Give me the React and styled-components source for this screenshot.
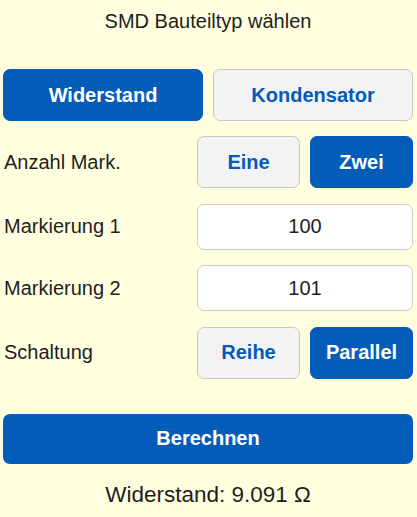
import React, { useState } from "react";
import styled, { createGlobalStyle } from "styled-components";

const Global = createGlobalStyle`
  html, body {
    margin: 0;
    padding: 0;
    background: #ffffe0;
  }
  body {
    font-family: "Liberation Sans", Arial, sans-serif;
    color: #1e1e1e;
  }
`;

const BLUE = "#045cb9";

const Page = styled.div`
  width: 410px;
  padding: 0 4px 0 3px;
  box-sizing: content-box;
  display: flex;
  flex-direction: column;
`;

const Title = styled.h1`
  margin: 0;
  padding-top: 10px;
  font-size: 20px;
  line-height: 23px;
  font-weight: normal;
  text-align: center;
`;

const TypeRow = styled.div`
  margin-top: 36px;
  display: grid;
  grid-template-columns: 1fr 1fr;
  column-gap: 10px;
  height: 52px;
`;

const ToggleButton = styled.button`
  box-sizing: border-box;
  height: 100%;
  width: 100%;
  margin: 0;
  border-radius: 7px;
  font-family: "Liberation Sans", Arial, sans-serif;
  font-size: 20px;
  font-weight: bold;
  cursor: pointer;
  border: 1px solid ${(p) => (p.$active ? BLUE : "#c9c6c0")};
  background: ${(p) => (p.$active ? BLUE : "#f3f3f4")};
  color: ${(p) => (p.$active ? "#ffffff" : BLUE)};
`;

const Form = styled.div`
  margin-top: 15px;
  display: grid;
  grid-template-columns: 194px 216px;
  row-gap: 15.5px;
  align-items: center;
`;

const Label = styled.div`
  font-size: 20px;
  line-height: 23px;
  padding-left: 1px;
`;

const Segmented = styled.div`
  display: grid;
  grid-template-columns: 1fr 1fr;
  column-gap: 10px;
  height: 52px;
`;

const Field = styled.input`
  box-sizing: border-box;
  width: 100%;
  height: 46px;
  margin: 0;
  border: 1px solid #cfccc6;
  border-radius: 7px;
  background: #ffffff;
  text-align: center;
  font-family: "Liberation Sans", Arial, sans-serif;
  font-size: 20px;
  color: #1e1e1e;
  outline: none;
`;

const CalcButton = styled.button`
  margin-top: 35px;
  height: 50px;
  width: 100%;
  border: none;
  border-radius: 7px;
  background: ${BLUE};
  color: #fff;
  font-family: "Liberation Sans", Arial, sans-serif;
  font-size: 20px;
  font-weight: bold;
  cursor: pointer;
`;

const Result = styled.div`
  margin-top: 18px;
  text-align: center;
  font-size: 22.5px;
  line-height: 26px;
`;

export default function App() {
  const [type, setType] = useState("w");
  const [count, setCount] = useState(2);
  const [circuit, setCircuit] = useState("p");
  const [m1, setM1] = useState("100");
  const [m2, setM2] = useState("101");

  return (
    <>
      <Global />
      <Page>
        <Title>SMD Bauteiltyp wählen</Title>
        <TypeRow>
          <ToggleButton $active={type === "w"} onClick={() => setType("w")}>
            Widerstand
          </ToggleButton>
          <ToggleButton $active={type === "k"} onClick={() => setType("k")}>
            Kondensator
          </ToggleButton>
        </TypeRow>
        <Form>
          <Label>Anzahl Mark.</Label>
          <Segmented>
            <ToggleButton $active={count === 1} onClick={() => setCount(1)}>
              Eine
            </ToggleButton>
            <ToggleButton $active={count === 2} onClick={() => setCount(2)}>
              Zwei
            </ToggleButton>
          </Segmented>
          <Label>Markierung 1</Label>
          <Field value={m1} onChange={(e) => setM1(e.target.value)} />
          <Label>Markierung 2</Label>
          <Field value={m2} onChange={(e) => setM2(e.target.value)} />
          <Label>Schaltung</Label>
          <Segmented>
            <ToggleButton $active={circuit === "r"} onClick={() => setCircuit("r")}>
              Reihe
            </ToggleButton>
            <ToggleButton $active={circuit === "p"} onClick={() => setCircuit("p")}>
              Parallel
            </ToggleButton>
          </Segmented>
        </Form>
        <CalcButton>Berechnen</CalcButton>
        <Result>Widerstand: 9.091 Ω</Result>
      </Page>
    </>
  );
}
